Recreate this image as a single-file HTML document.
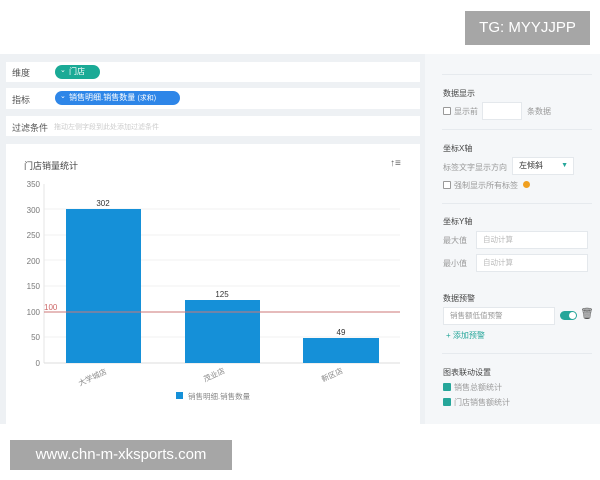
<!DOCTYPE html>
<html><head><meta charset="utf-8"><style>
*{margin:0;padding:0;box-sizing:border-box}
body{width:600px;height:480px;position:relative;background:#fff;font-family:"Liberation Sans","Noto Sans CJK SC",sans-serif;font-size:9px;color:#555;overflow:hidden}
.a{position:absolute}
.card{position:absolute;background:#fff;left:6px;width:414px}
.pill{position:absolute;color:#fff;border-radius:10px;height:14px;line-height:14px;font-size:8px;padding-left:14px}
.rp{color:#444;font-size:8px}
.cb{position:absolute;width:8px;height:8px;border:1px solid #999;background:#fff;border-radius:1px}
.cbc{background:#26a69a;border-color:#26a69a}
.inp{position:absolute;background:#fff;border:1px solid #e4e8ec;height:18px;color:#bbb;font-size:7.5px;line-height:16px;padding-left:6px}
.hr{position:absolute;left:442px;width:150px;height:1px;background:#e6eaee}
.g{color:#999;font-size:8px}
</style></head><body>
<div class="a" style="left:465px;top:11px;width:125px;height:34px;background:#a6a6a6;color:#fff;font-size:15px;line-height:34px;text-align:center">TG: MYYJJPP</div>
<div class="a" style="left:0;top:54px;width:600px;height:370px;background:#eef1f4"></div>
<div class="a" style="left:425px;top:54px;width:175px;height:370px;background:#f5f7f9"></div>

<div class="card" style="top:62px;height:20px"><span class="a" style="left:6px;top:4px">维度</span>
<div class="pill" style="left:49px;top:3px;width:45px;background:#1aaa96">门店</div><span class="a" style="left:54px;top:4px;color:#fff;font-size:7px">⌄</span></div>
<div class="card" style="top:88px;height:21px"><span class="a" style="left:6px;top:5px">指标</span>
<div class="pill" style="left:49px;top:3px;width:125px;background:#2e86e8">销售明细.销售数量 <span style="font-size:7px">(求和)</span></div><span class="a" style="left:54px;top:4px;color:#fff;font-size:7px">⌄</span></div>
<div class="card" style="top:116px;height:20px"><span class="a" style="left:6px;top:5px">过滤条件</span><span class="a" style="left:48px;top:6px;font-size:7px;color:#ccc">拖动左侧字段到此处添加过滤条件</span></div>

<div class="card" style="top:144px;height:280px">
<span class="a" style="left:18px;top:15px;color:#444">门店销量统计</span>
<span class="a" style="left:384px;top:14px;color:#666;font-size:10px">↑≡</span>
</div>
<svg class="a" style="left:0;top:170px" width="420" height="240">
<g font-size="8" fill="#777" text-anchor="end" font-family="Liberation Sans">
<text x="40" y="17">350</text><text x="40" y="43">300</text><text x="40" y="68">250</text><text x="40" y="94">200</text><text x="40" y="119">150</text><text x="40" y="145">100</text><text x="40" y="170">50</text><text x="40" y="196">0</text></g>
<g stroke="#f2f2f2"><line x1="44" y1="39" x2="400" y2="39"/><line x1="44" y1="65" x2="400" y2="65"/><line x1="44" y1="90" x2="400" y2="90"/><line x1="44" y1="116" x2="400" y2="116"/><line x1="44" y1="167" x2="400" y2="167"/></g>
<line x1="44" y1="14" x2="44" y2="193" stroke="#e5e5e5"/>
<line x1="44" y1="193" x2="400" y2="193" stroke="#ddd"/>
<rect x="66" y="39" width="75" height="154" fill="#1590d8"/>
<rect x="185" y="130" width="75" height="63" fill="#1590d8"/>
<rect x="303" y="168" width="76" height="25" fill="#1590d8"/>
<line x1="44" y1="142" x2="400" y2="142" stroke="#c77" stroke-width="1"/>
<text x="44" y="140" font-size="8" fill="#c66">100</text>
<g font-size="8" fill="#333" text-anchor="middle"><text x="103" y="36">302</text><text x="222" y="127">125</text><text x="341" y="165">49</text></g>
<g font-size="7.5" fill="#888" font-family="Liberation Sans,Noto Sans CJK SC,sans-serif">
<text transform="translate(80,216) rotate(-25)">大学城店</text>
<text transform="translate(205,212) rotate(-25)">茂业店</text>
<text transform="translate(323,212) rotate(-25)">新区店</text>
<rect x="176" y="222" width="7" height="7" fill="#1590d8"/><text x="188" y="229">销售明细.销售数量</text></g>
</svg>

<div class="hr" style="top:74px"></div>
<span class="a rp" style="left:443px;top:88px">数据显示</span>
<div class="cb" style="left:443px;top:107px"></div><span class="a g" style="left:454px;top:106px">显示前</span>
<div class="inp" style="left:482px;top:102px;width:40px"></div><span class="a g" style="left:527px;top:106px">条数据</span>
<div class="hr" style="top:129px"></div>
<span class="a rp" style="left:443px;top:143px">坐标X轴</span>
<span class="a g" style="left:443px;top:162px">标签文字显示方向</span>
<div class="inp" style="left:512px;top:157px;width:62px;color:#333;font-size:8px">左倾斜<span style="position:absolute;right:5px;top:0;color:#26a69a;font-size:7px">▼</span></div>
<div class="cb" style="left:443px;top:181px"></div><span class="a g" style="left:454px;top:180px">强制显示所有标签</span>
<div class="a" style="left:523px;top:181px;width:7px;height:7px;border-radius:50%;background:#f0a020"></div>
<div class="hr" style="top:203px"></div>
<span class="a rp" style="left:443px;top:216px">坐标Y轴</span>
<span class="a g" style="left:443px;top:235px">最大值</span><div class="inp" style="left:476px;top:231px;width:112px">自动计算</div>
<span class="a g" style="left:443px;top:258px">最小值</span><div class="inp" style="left:476px;top:254px;width:112px">自动计算</div>
<span class="a rp" style="left:443px;top:293px">数据预警</span>
<div class="inp" style="left:443px;top:307px;width:112px;color:#999">销售额低值预警</div>
<div class="a" style="left:560px;top:311px;width:17px;height:9px;border-radius:5px;background:#26a69a"><div style="position:absolute;right:1px;top:1px;width:7px;height:7px;border-radius:50%;background:#fff"></div></div>
<span class="a" style="left:580px;top:307px;color:#555;font-size:11px">🗑</span>
<span class="a" style="left:446px;top:330px;color:#26a69a;font-size:8px">+ 添加预警</span>
<div class="hr" style="top:353px"></div>
<span class="a rp" style="left:443px;top:367px">图表联动设置</span>
<div class="cb cbc" style="left:443px;top:383px"></div><span class="a g" style="left:454px;top:382px">销售总额统计</span>
<div class="cb cbc" style="left:443px;top:398px"></div><span class="a g" style="left:454px;top:397px">门店销售额统计</span>

<div class="a" style="left:10px;top:440px;width:222px;height:30px;background:#a6a6a6;color:#fff;font-size:15px;line-height:30px;text-align:center">www.chn-m-xksports.com</div>
</body></html>
